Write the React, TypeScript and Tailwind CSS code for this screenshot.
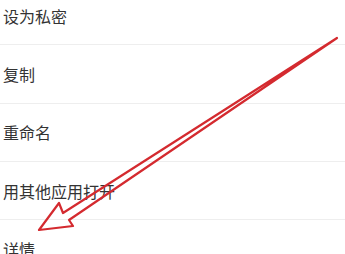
const items = ['设为私密', '复制', '重命名', '用其他应用打开', '详情'];

export default function App() {
  return (
    <div
      className="relative w-[345px] h-[254px] overflow-hidden bg-white"
      style={{ fontFamily: '"Noto Sans CJK SC", "Noto Sans", sans-serif' }}
    >
      <div className="-mt-[13px] flex flex-col">
        {items.map((item) => (
          <div
            key={item}
            className="h-[58.3px] shrink-0 flex items-center pl-[3px] border-b border-[#eeeeee] text-[16px] text-[#333333]"
          >
            {item}
          </div>
        ))}
      </div>
      <svg
        className="absolute inset-0 pointer-events-none"
        width="345"
        height="254"
        viewBox="0 0 345 254"
      >
        <polygon
          points="39,230 59,203 63,213 337,38 69,220 73,226"
          fill="none"
          stroke="#d42a2f"
          strokeWidth="2.2"
          strokeLinejoin="round"
        />
      </svg>
    </div>
  );
}
